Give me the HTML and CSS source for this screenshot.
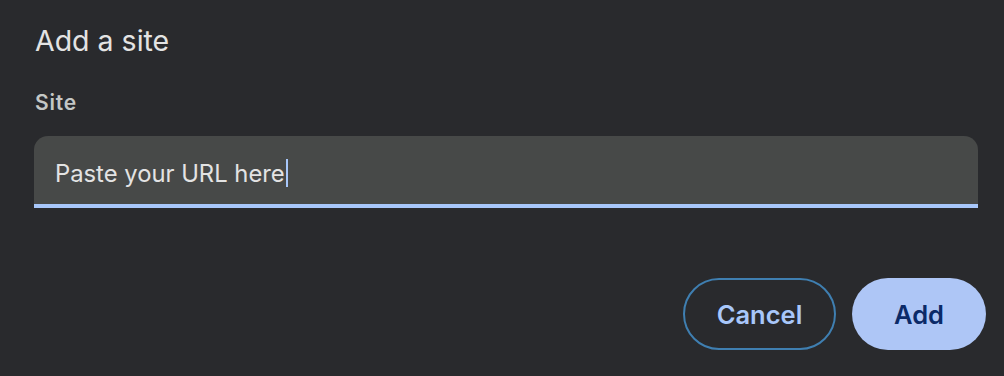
FILE: index.html
```html
<!DOCTYPE html>
<html>
<head>
<meta charset="utf-8">
<link rel="stylesheet" href="styles.css">
</head>
<body>
<div class="dialog">
  <h1 class="title">Add a site</h1>
  <div class="label">Site</div>
  <div class="field">
    <span class="value">Paste your URL here</span><span class="caret"></span>
  </div>
  <div class="actions">
    <button class="btn cancel">Cancel</button>
    <button class="btn add">Add</button>
  </div>
</div>
</body>
</html>
```
FILE: styles.css
```css
html, body {
  margin: 0;
  padding: 0;
  background: #292a2d;
  width: 1004px;
  height: 376px;
  overflow: hidden;
  font-family: Inter, "Liberation Sans", sans-serif;
}
.dialog {
  padding: 22px 18px 0 34px;
  display: flex;
  flex-direction: column;
}
.title {
  margin: 0;
  font-size: 28.5px;
  font-weight: 400;
  color: #e3e3e3;
  line-height: 38px;
  padding-left: 1px;
}
.label {
  margin-top: 30px;
  font-size: 21px;
  font-weight: 600;
  color: #c4c7c5;
  line-height: 26px;
  padding-left: 1px;
  letter-spacing: 0.8px;
}
.field {
  margin-top: 20px;
  margin-right: 8px;
  height: 68px;
  background: #474948;
  border-radius: 14px 14px 0 0;
  border-bottom: 4px solid #a8c7fa;
  display: flex;
  align-items: center;
  padding-left: 21px;
}
.value {
  font-size: 23.8px;
  color: #e3e3e3;
  padding-top: 6px;
}
.caret {
  width: 2px;
  height: 28px;
  background: #a8c7fa;
  margin-left: 1px;
  margin-top: 6px;
}
.actions {
  margin-top: 70px;
  display: flex;
  justify-content: flex-end;
  gap: 16px;
}
.btn {
  font-family: Inter, "Liberation Sans", sans-serif;
  font-size: 25.5px;
  font-weight: 600;
  height: 72px;
  border-radius: 36px;
  cursor: pointer;
  padding: 0;
}
.cancel {
  width: 153px;
  background: transparent;
  border: 2px solid #3f7fb1;
  color: #a8c7fa;
}
.add {
  width: 134px;
  background: #aec6f6;
  border: none;
  color: #0b2a68;
}
```
